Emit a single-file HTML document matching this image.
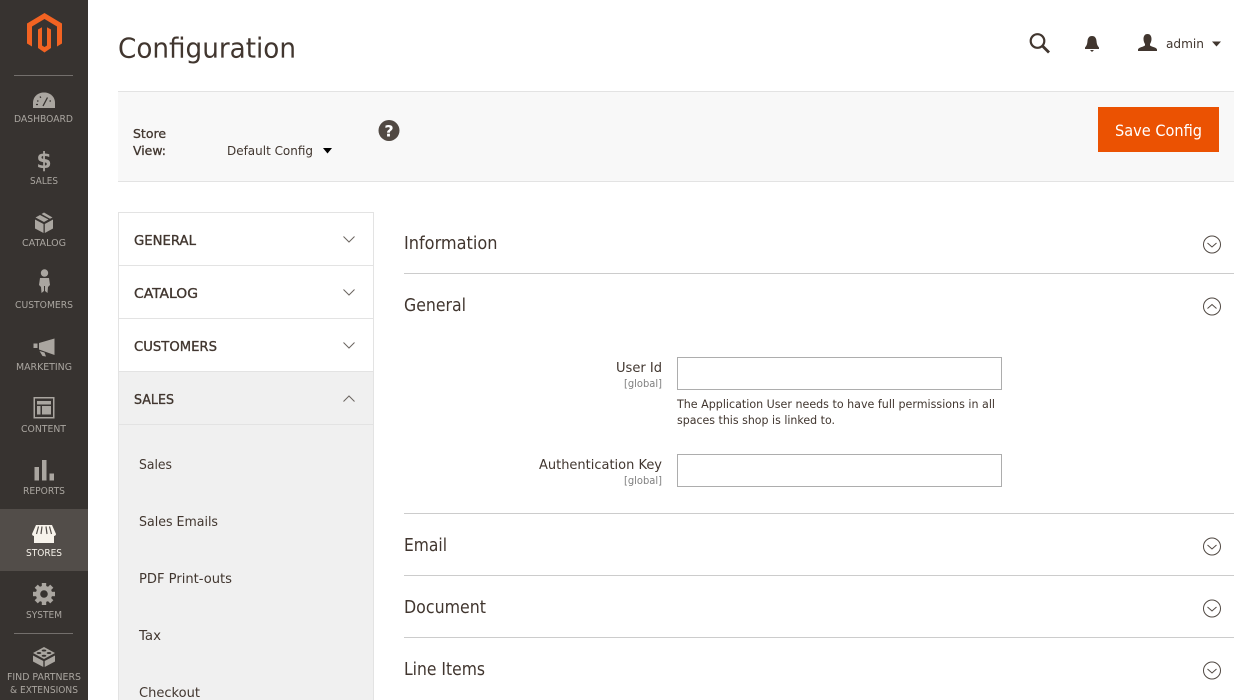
<!DOCTYPE html>
<html><head><meta charset="utf-8"><title>Configuration</title>
<style>
html,body{margin:0;padding:0;background:#fff;width:1260px;height:700px;overflow:hidden}
svg{display:block}
text{font-family:"DejaVu Sans","Liberation Sans",sans-serif}
.n{font-size:9.6px;fill:#aaa6a0}
.b{font-size:13.5px;fill:#41362f;stroke:#41362f;stroke-width:.35px}
.t{font-size:13.4px;fill:#41362f}
.h{font-size:17.4px;fill:#41362f}
.g{font-size:10.4px;fill:#808080}
.ic{fill:#aaa6a0}
.ch{fill:none;stroke:#514943;stroke-width:1}
.cl{fill:none;stroke:#6b6560;stroke-width:1}
</style></head><body>
<svg width="1260" height="700" viewBox="0 0 1260 700" xmlns="http://www.w3.org/2000/svg">
<rect width="1260" height="700" fill="#fff"/>
<!-- sidebar -->
<rect width="88" height="700" fill="#373330"/>
<rect y="509" width="88" height="62" fill="#524d49"/>
<path fill="#f26322" d="M44.500 13L62 23.500V43.500L57 46.500V26.500L44.500 19L32 26.500V46.500L27 43.500V23.500Z"/>
<path fill="#f26322" d="M38 29.500L42 27.200V45.500L44.500 47L47 45.500V27.200L51 29.500V48L44.500 52.500L38 48Z"/>
<rect x="14" y="75" width="59" height="1" fill="#736f6c"/>
<rect x="14" y="633" width="59" height="1" fill="#736f6c"/>
<!-- dashboard -->
<path class="ic" d="M33 108V103C33 96.500 38 92.500 44 92.500C50 92.500 55 96.500 55 103V108Z"/>
<path d="M43 106L47.500 97.500M37 101h1.500M40 96.500l.8 1.300M49.500 101H51M36 104.500h2" stroke="#373330" stroke-width="1.300" fill="none"/>
<text class="n" x="14" y="122" textLength="59" lengthAdjust="spacingAndGlyphs">DASHBOARD</text>
<!-- sales -->
<text x="44" y="168" text-anchor="middle" style="font-size:22px;font-weight:bold;fill:#aaa6a0">$</text>
<text class="n" x="30" y="184" textLength="28" lengthAdjust="spacingAndGlyphs">SALES</text>
<!-- catalog -->
<path class="ic" d="M35 219.500L43.500 224V233L35 228.500ZM53 219.500L44.800 224V233L53 228.500ZM35.500 217.500L40 215L48.500 219.500L44 222ZM41.500 214L44 212.500L52.500 217.500L50 218.700Z"/>
<text class="n" x="22" y="246" textLength="44" lengthAdjust="spacingAndGlyphs">CATALOG</text>
<!-- customers -->
<circle class="ic" cx="44.500" cy="273" r="3.700"/>
<path class="ic" d="M40 278H49L50 285L48 287L47.500 293L45 291V286H44V291L41.500 293L41 287L39 285Z"/>
<text class="n" x="15" y="308" textLength="58" lengthAdjust="spacingAndGlyphs">CUSTOMERS</text>
<!-- marketing -->
<path class="ic" d="M33.500 343.500H37.500V348H33.500ZM39 343L54.500 338.500V355L39 349.500ZM39.500 351L44.500 352.500L46 356.500L42.500 356Z"/>
<text class="n" x="16" y="370" textLength="56" lengthAdjust="spacingAndGlyphs">MARKETING</text>
<!-- content -->
<path class="ic" fill-rule="evenodd" d="M33.500 397H54.500V418.500H33.500ZM35 398.500V417H53V398.500Z"/>
<path class="ic" d="M37 401H51V404.500H37ZM37 406H40.500V414.500H37ZM42 406H51V414.500H42Z"/>
<text class="n" x="21" y="432" textLength="45" lengthAdjust="spacingAndGlyphs">CONTENT</text>
<!-- reports -->
<path class="ic" d="M34.500 467H39V480.500H34.500ZM42 460H46.500V480.500H42ZM49.500 473.500H54V480.500H49.500Z"/>
<text class="n" x="23" y="494" textLength="42" lengthAdjust="spacingAndGlyphs">REPORTS</text>
<!-- stores -->
<path fill="#f7f3eb" d="M36 525H52L56 534C56 536 53.500 536.500 52.500 535.500H35.500C34.500 536.500 32 536 32 534Z"/>
<path d="M38.500 526.500L36.500 534M42 526.500L41 534M46 526.500L47 534M49.500 526.500L51.500 534" stroke="#524d49" stroke-width="1.200" fill="none"/>
<path fill="#f7f3eb" d="M34 535.500H54V543H34Z"/>
<text class="n" x="26" y="556" textLength="36" lengthAdjust="spacingAndGlyphs" style="fill:#f7f3eb">STORES</text>
<!-- system -->
<g class="ic" transform="translate(44 594)">
<circle r="8.200" fill="#aaa6a0"/>
<g fill="#aaa6a0"><rect x="-2.200" y="-11" width="4.400" height="22"/><rect x="-2.200" y="-11" width="4.400" height="22" transform="rotate(45)"/><rect x="-2.200" y="-11" width="4.400" height="22" transform="rotate(90)"/><rect x="-2.200" y="-11" width="4.400" height="22" transform="rotate(135)"/></g>
<circle r="3.800" fill="#373330"/>
</g>
<text class="n" x="26" y="618" textLength="36" lengthAdjust="spacingAndGlyphs">SYSTEM</text>
<!-- partners -->
<path class="ic" d="M33 653L44 647L55 653L44 659ZM33 655.500L43.300 661V667L33 661.500ZM55 655.500L44.700 661V667L55 661.500Z"/>
<g fill="#373330"><ellipse cx="44" cy="650.500" rx="2.300" ry="1"/><ellipse cx="39" cy="653" rx="2.300" ry="1"/><ellipse cx="49" cy="653" rx="2.300" ry="1"/><ellipse cx="44" cy="655.800" rx="2.300" ry="1"/></g>
<text class="n" x="7" y="680" textLength="74" lengthAdjust="spacingAndGlyphs">FIND PARTNERS</text>
<text class="n" x="10" y="693" textLength="68" lengthAdjust="spacingAndGlyphs">&amp; EXTENSIONS</text>

<!-- header -->
<text x="118" y="57.500" textLength="178" lengthAdjust="spacingAndGlyphs" style="font-size:27.500px;fill:#41362f">Configuration</text>
<circle cx="1037.500" cy="41" r="6.800" fill="none" stroke="#41362f" stroke-width="2.200"/>
<path d="M1042.500 46L1049 52.500" stroke="#41362f" stroke-width="2.800" fill="none"/>
<path fill="#41362f" d="M1092 36C1088.800 36 1087.700 38.500 1087.500 41C1087.300 44 1086.500 46 1085 47.500V49H1099V47.500C1097.500 46 1096.700 44 1096.500 41C1096.300 38.500 1095.200 36 1092 36Z"/>
<path fill="#41362f" d="M1090 50H1094L1092 52Z"/>
<path fill="#41362f" d="M1147.500 34C1144.500 34 1143.500 36.500 1143.500 39C1143.500 41 1144.300 43 1145 44V45.500C1143 47 1138.500 47.300 1138 49.500V51H1157V49.500C1156.500 47.300 1152 47 1150 45.500V44C1150.700 43 1151.500 41 1151.500 39C1151.500 36.500 1150.500 34 1147.500 34Z"/>
<text x="1166" y="48" textLength="38" lengthAdjust="spacingAndGlyphs" style="font-size:12.700px;fill:#41362f">admin</text>
<path fill="#41362f" d="M1212 41.500H1221L1216.500 46.500Z"/>

<!-- toolbar -->
<rect x="118" y="92" width="1116" height="90" fill="#f8f8f8"/>
<rect x="118" y="91" width="1116" height="1" fill="#e3e3e3"/>
<rect x="118" y="181" width="1116" height="1" fill="#e3e3e3"/>
<text x="133" y="138" textLength="33" lengthAdjust="spacingAndGlyphs" style="font-size:12.800px;fill:#41362f;stroke:#41362f;stroke-width:.3px">Store</text>
<text x="133" y="155" textLength="33" lengthAdjust="spacingAndGlyphs" style="font-size:12.800px;fill:#41362f;stroke:#41362f;stroke-width:.3px">View:</text>
<text x="227" y="155" textLength="86" lengthAdjust="spacingAndGlyphs" style="font-size:12.800px;fill:#41362f">Default Config</text>
<path fill="#000" d="M323 148H332L327.500 153.500Z"/>
<circle cx="389" cy="130.500" r="10.500" fill="#514943"/>
<text x="389" y="136.500" text-anchor="middle" style="font-size:16px;font-weight:bold;fill:#fff">?</text>
<rect x="1098" y="107" width="121" height="45" fill="#eb5202"/>
<text x="1115" y="136" textLength="87" lengthAdjust="spacingAndGlyphs" style="font-size:15.800px;fill:#fff">Save Config</text>

<!-- left panel -->
<rect x="118.500" y="212.500" width="255" height="500" fill="#fff" stroke="#e3e3e3"/>
<rect x="119" y="372" width="254" height="340" fill="#f0f0f0"/>
<path d="M119 265.500H373M119 318.500H373M119 371.500H373M119 424.500H373" stroke="#e3e3e3" fill="none"/>
<text class="b" x="134" y="245" textLength="62" lengthAdjust="spacingAndGlyphs">GENERAL</text>
<text class="b" x="134" y="298" textLength="64" lengthAdjust="spacingAndGlyphs">CATALOG</text>
<text class="b" x="134" y="351" textLength="83" lengthAdjust="spacingAndGlyphs">CUSTOMERS</text>
<text class="b" x="134" y="404" textLength="40" lengthAdjust="spacingAndGlyphs">SALES</text>
<path class="cl" d="M343.500 236.500L349 242L354.500 236.500M343.500 289.500L349 295L354.500 289.500M343.500 342.500L349 348L354.500 342.500M343.500 401.500L349 396L354.500 401.500"/>
<text class="t" x="139" y="469" textLength="33" lengthAdjust="spacingAndGlyphs">Sales</text>
<text class="t" x="139" y="526" textLength="79" lengthAdjust="spacingAndGlyphs">Sales Emails</text>
<text class="t" x="139" y="583" textLength="93" lengthAdjust="spacingAndGlyphs">PDF Print-outs</text>
<text class="t" x="139" y="640" textLength="22" lengthAdjust="spacingAndGlyphs">Tax</text>
<text class="t" x="139" y="697" textLength="61" lengthAdjust="spacingAndGlyphs">Checkout</text>

<!-- right -->
<text class="h" x="404" y="249" textLength="93.500" lengthAdjust="spacingAndGlyphs">Information</text>
<text class="h" x="404" y="311" textLength="62" lengthAdjust="spacingAndGlyphs">General</text>
<text class="h" x="404" y="551" textLength="43" lengthAdjust="spacingAndGlyphs">Email</text>
<text class="h" x="404" y="613" textLength="82" lengthAdjust="spacingAndGlyphs">Document</text>
<text class="h" x="404" y="675" textLength="81" lengthAdjust="spacingAndGlyphs">Line Items</text>
<path d="M404 273.500H1234M404 513.500H1234M404 575.500H1234M404 637.500H1234" stroke="#cccccc" fill="none"/>
<g class="ch">
<circle cx="1212" cy="244.500" r="8.500"/><path d="M1207.500 243L1212 247L1216.500 243"/>
<circle cx="1212" cy="306.500" r="8.500"/><path d="M1207.500 308.500L1212 304.500L1216.500 308.500"/>
<circle cx="1212" cy="546.500" r="8.500"/><path d="M1207.500 545L1212 549L1216.500 545"/>
<circle cx="1212" cy="608.500" r="8.500"/><path d="M1207.500 607L1212 611L1216.500 607"/>
<circle cx="1212" cy="670.500" r="8.500"/><path d="M1207.500 669L1212 673L1216.500 669"/>
</g>
<text class="t" x="616" y="372" textLength="46" lengthAdjust="spacingAndGlyphs">User Id</text>
<text class="g" x="624" y="387" textLength="38" lengthAdjust="spacingAndGlyphs">[global]</text>
<rect x="677.500" y="357.500" width="324" height="32" fill="#fff" stroke="#adadad"/>
<text x="677" y="408" textLength="318" lengthAdjust="spacingAndGlyphs" style="font-size:11.800px;fill:#41362f">The Application User needs to have full permissions in all</text>
<text x="677" y="424" textLength="158" lengthAdjust="spacingAndGlyphs" style="font-size:11.800px;fill:#41362f">spaces this shop is linked to.</text>
<text class="t" x="539" y="469" textLength="123" lengthAdjust="spacingAndGlyphs">Authentication Key</text>
<text class="g" x="624" y="484" textLength="38" lengthAdjust="spacingAndGlyphs">[global]</text>
<rect x="677.500" y="454.500" width="324" height="32" fill="#fff" stroke="#adadad"/>
</svg>
</body></html>
